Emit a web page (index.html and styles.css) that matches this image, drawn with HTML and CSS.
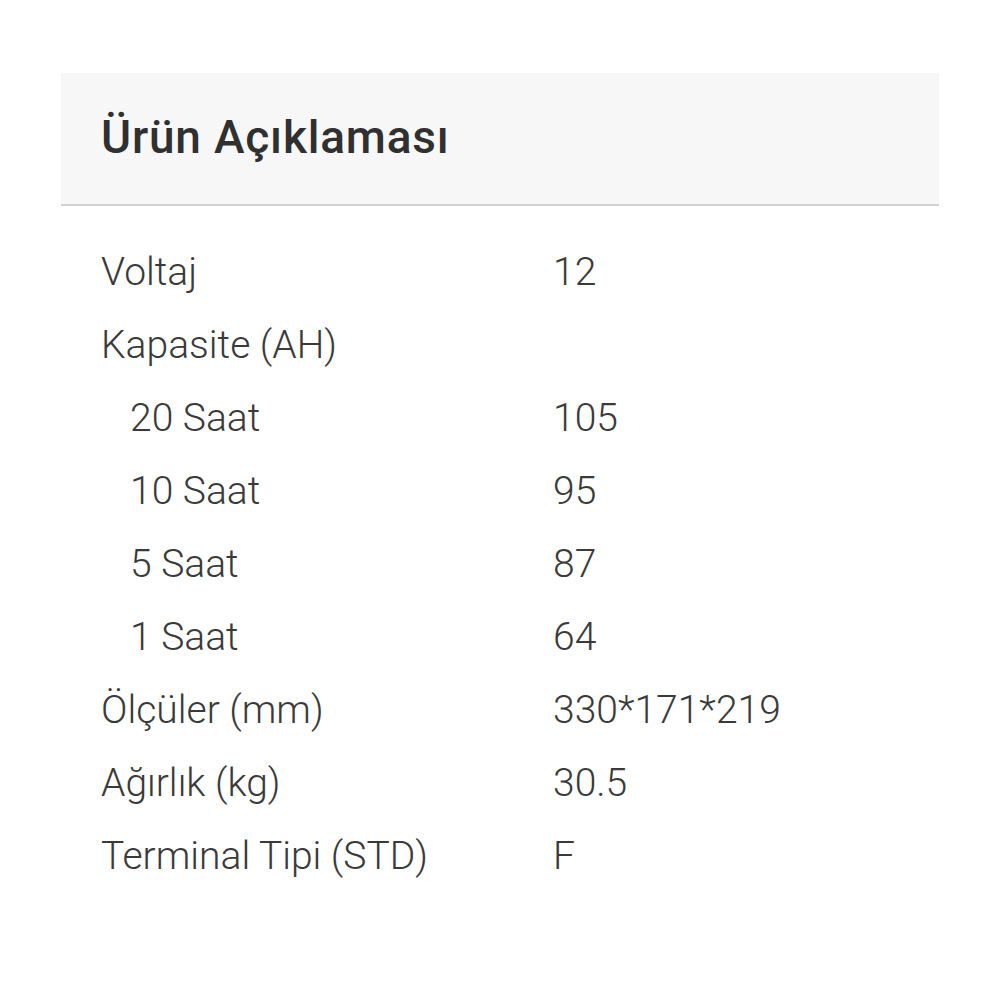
FILE: index.html
```html
<!DOCTYPE html>
<html lang="tr">
<head>
<meta charset="utf-8">
<link rel="stylesheet" href="styles.css">
</head>
<body>
<section class="panel">
  <header class="panel-head">
    <h2 class="title">Ürün Açıklaması</h2>
  </header>
  <div class="specs">
    <div class="row"><span class="label">Voltaj</span><span class="value">12</span></div>
    <div class="row"><span class="label">Kapasite (AH)</span><span class="value"></span></div>
    <div class="row sub"><span class="label">20 Saat</span><span class="value">105</span></div>
    <div class="row sub"><span class="label">10 Saat</span><span class="value">95</span></div>
    <div class="row sub"><span class="label">5 Saat</span><span class="value">87</span></div>
    <div class="row sub"><span class="label">1 Saat</span><span class="value">64</span></div>
    <div class="row"><span class="label">Ölçüler (mm)</span><span class="value">330*171*219</span></div>
    <div class="row"><span class="label">Ağırlık (kg)</span><span class="value">30.5</span></div>
    <div class="row"><span class="label">Terminal Tipi (STD)</span><span class="value">F</span></div>
  </div>
</section>
</body>
</html>
```
FILE: styles.css
```css
html, body {
  margin: 0;
  background: #ffffff;
}
body {
  padding: 73px 61px;
  font-family: Roboto, "Noto Sans", sans-serif;
  color: #333333;
}
.panel {
  width: 878px;
}
.panel-head {
  background: #f7f7f7;
  height: 131px;
  border-bottom: 2px solid #d2d2d2;
  display: flex;
  align-items: center;
  padding: 0 40px 4px;
  box-sizing: border-box;
  height: 133px;
}
.title {
  margin: 0;
  font-size: 46px;
  font-weight: 500;
  letter-spacing: 0.8px;
  color: #303030;
  line-height: 1;
}
.specs {
  padding: 30px 40px 0;
}
.row {
  display: grid;
  grid-template-columns: 452px 1fr;
  height: 73px;
  line-height: 73px;
  font-size: 39px;
  font-weight: 300;
  color: #3a3a3a;
}
.row.sub .label {
  padding-left: 29px;
}
```
